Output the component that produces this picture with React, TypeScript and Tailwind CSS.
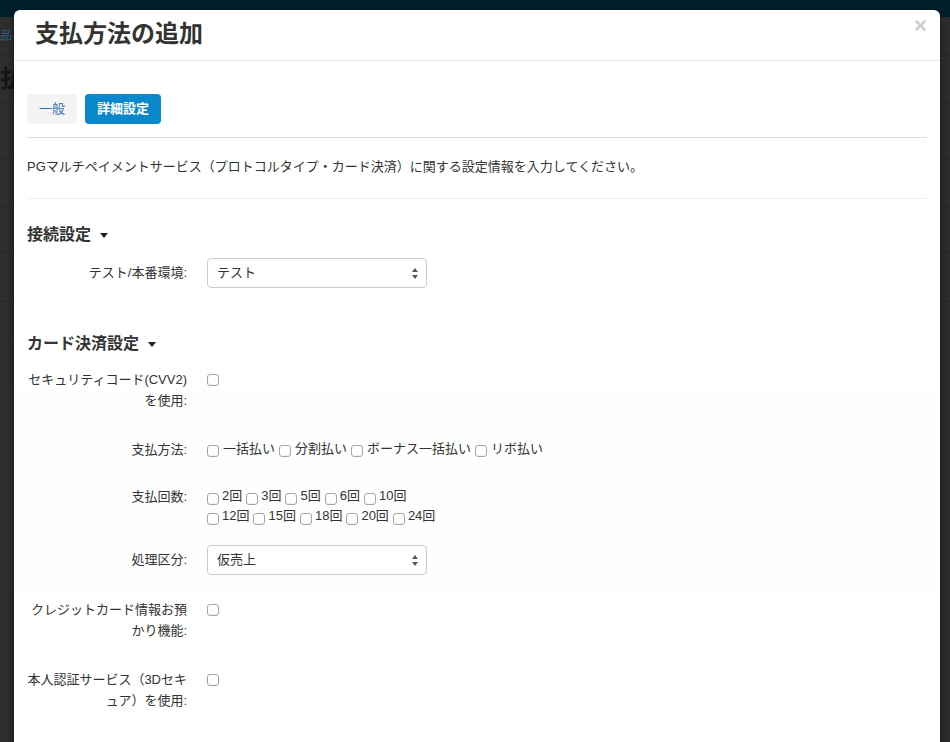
import { ReactNode } from 'react';

const FONT = '"Liberation Sans", "Noto Sans CJK JP", sans-serif';

const Check = () => (
  <input
    type="checkbox"
    className="appearance-none w-[12px] h-[12px] shrink-0 rounded-[3px] border border-[#a6a6a6] bg-white shadow-[inset_0_-1px_1px_rgba(0,0,0,0.06)] align-middle"
  />
);

const SelectBox = ({ value }: { value: string }) => (
  <div className="relative w-[220px] h-[30px] rounded-[4px] border border-[#cccccc] bg-white flex items-center pl-[9px] text-[13px] text-[#333]">
    <span>{value}</span>
    <svg className="absolute right-[8px] top-[9px]" width="6" height="11" viewBox="0 0 6 11">
      <path d="M3 0 L6 4 L0 4 Z" fill="#555" />
      <path d="M3 11 L6 7 L0 7 Z" fill="#555" />
    </svg>
  </div>
);

const Row = ({ label, children, className }: { label: ReactNode; children: ReactNode; className?: string }) => (
  <div className={`flex gap-[20px] ${className ?? ''}`}>
    <div className="w-[160px] shrink-0 text-right text-[13px] leading-[21px] text-[#333]">{label}</div>
    <div className="flex-1">{children}</div>
  </div>
);

const SectionTitle = ({ text, className }: { text: string; className?: string }) => (
  <div className={`flex items-center gap-[9px] h-[22px] text-[16px] font-bold text-[#333] ${className ?? ''}`}>
    <span>{text}</span>
    <svg width="8" height="5" viewBox="0 0 8 5">
      <path d="M0 0 L8 0 L4 5 Z" fill="#222" />
    </svg>
  </div>
);

const CheckItem = ({ text, gap = 'ml-[4px]' }: { text: string; gap?: string }) => (
  <span className="inline-flex items-center mr-[4px]">
    <span className="mt-[5px] flex"><Check /></span>
    <span className={`${gap} text-[13px] text-[#333]`}>{text}</span>
  </span>
);

export default function App() {
  const methods = ['一括払い', '分割払い', 'ボーナス一括払い', 'リボ払い'];
  const counts1 = ['2回', '3回', '5回', '6回', '10回'];
  const counts2 = ['12回', '15回', '18回', '20回', '24回'];

  return (
    <div className="relative w-[950px] h-[742px] overflow-hidden bg-[#2e2e2e]" style={{ fontFamily: FONT }}>
      {/* dimmed page behind the modal */}
      <div className="h-[17px] bg-[#02202b]" />
      <div className="h-[38px] border-b border-[#262626] flex items-center text-[12px] text-[#2f5f80]">
        <span>品 ▾</span>
      </div>
      <div className="h-[48px] border-b border-[#262626] flex items-center text-[24px] font-bold text-[#151515]">
        <span>払</span>
      </div>
      <div className="h-[56px] border-b border-[#262626]" />
      <div className="h-[48px] border-b border-[#262626]" />
      <div className="h-[46px] border-b border-[#262626]" />
      <div className="h-[49px] border-b border-[#262626]" />

      {/* modal */}
      <div className="absolute top-[10px] left-[14px] w-[926px] h-[760px] bg-white rounded-t-[6px] shadow-[0_3px_9px_rgba(0,0,0,0.5)]">
        <div className="h-[51px] border-b border-[#e5e5e5] flex items-center justify-between pl-[21px] pr-[14px]">
          <h1 className="text-[24px] font-bold text-[#333] leading-none -mt-[2px]">支払方法の追加</h1>
          <svg className="-mt-[20px]" width="11" height="11" viewBox="0 0 11 11">
            <path d="M1.5 1.5 L9.5 9.5 M9.5 1.5 L1.5 9.5" stroke="#cfcfcf" strokeWidth="2.6" strokeLinecap="round" />
          </svg>
        </div>

        <div className="px-[13px] pt-[33px]">
          <div className="flex gap-[8px]">
            <button className="w-[50px] h-[30px] rounded-[4px] bg-[#f4f4f4] text-[13px] text-[#2f6fb0]">一般</button>
            <button className="w-[76px] h-[30px] rounded-[4px] bg-[#0a88cb] text-[13px] font-bold text-white">詳細設定</button>
          </div>
          <div className="mt-[13px] border-t border-[#dddddd]" />

          <p className="mt-[19px] text-[13px] leading-[20px] text-[#333]">
            PGマルチペイメントサービス（プロトコルタイプ・カード決済）に関する設定情報を入力してください。
          </p>
          <div className="mt-[21px] border-t border-[#eeeeee]" />

          <SectionTitle text="接続設定" className="mt-[25px]" />
          <Row label={<span className="leading-[30px]">テスト/本番環境:</span>} className="mt-[12px]">
            <SelectBox value="テスト" />
          </Row>

          <SectionTitle text="カード決済設定" className="mt-[45px]" />
          <Row label={<>セキュリティコード(CVV2)<br />を使用:</>} className="mt-[14px]">
            <div className="pt-[5px] flex"><Check /></div>
          </Row>
        </div>

        <div className="bg-[#fefefe] px-[13px] -mt-[22px] pt-[50px] pb-[18px]">
          <Row label="支払方法:">
            <div className="flex flex-wrap">
              {methods.map(m => (
                <CheckItem key={m} text={m} />
              ))}
            </div>
          </Row>
          <Row label="支払回数:" className="mt-[26px]">
            <div className="flex flex-col">
              <div className="flex h-[20px] items-center">
                {counts1.map(c => (
                  <CheckItem key={c} text={c} gap="ml-[3px]" />
                ))}
              </div>
              <div className="flex h-[20px] items-center">
                {counts2.map(c => (
                  <CheckItem key={c} text={c} gap="ml-[3px]" />
                ))}
              </div>
            </div>
          </Row>
          <Row label={<span className="leading-[30px]">処理区分:</span>} className="mt-[19px]">
            <SelectBox value="仮売上" />
          </Row>
        </div>

        <div className="px-[13px]">
          <Row label={<>クレジットカード情報お預<br />かり機能:</>} className="mt-[6px]">
            <div className="pt-[5px] flex"><Check /></div>
          </Row>
          <Row label={<>本人認証サービス（3Dセキ<br />ュア）を使用:</>} className="mt-[28px]">
            <div className="pt-[5px] flex"><Check /></div>
          </Row>
        </div>
      </div>
    </div>
  );
}
